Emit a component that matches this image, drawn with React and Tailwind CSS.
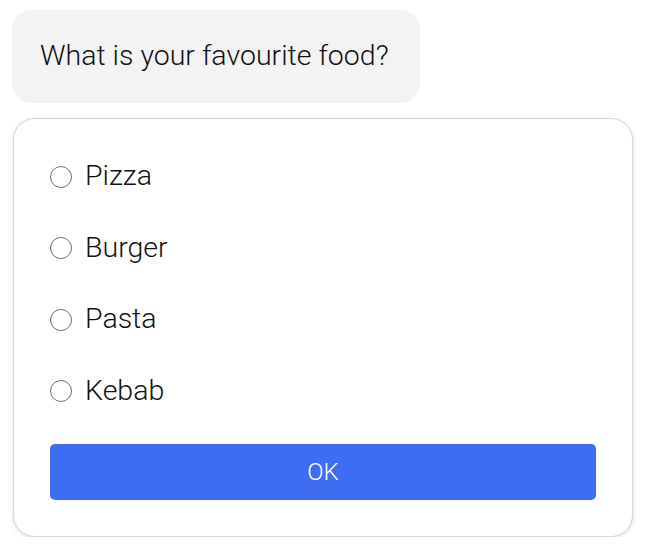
import { useState } from "react";

const options = ["Pizza", "Burger", "Pasta", "Kebab"];

const App = () => {
    const [value, setValue] = useState(null);

    return (
        <div className="pt-[10px] pl-[12px] font-['Roboto',sans-serif] text-[#111]">
            <div className="w-[408px] h-[93px] rounded-[20px] bg-[#f3f3f3] flex items-center pl-[28px] text-[28.5px] font-light">
                What is your favourite food?
            </div>
            <div className="mt-[15px] ml-[1px] w-[620px] rounded-[22px] border border-[#d8d8d8] bg-white shadow-[0_1px_4px_rgba(0,0,0,0.14)] px-[36px] pt-[22px] pb-[36px]">
                {options.map((option) => (
                    <label key={option} className="h-[71.5px] flex items-center gap-[13px] cursor-pointer">
                        <span
                            className="w-[22px] h-[22px] rounded-full border-[1.5px] border-[#6f6f6f] flex items-center justify-center"
                            onClick={() => setValue(option)}
                        >
                            {value === option && <span className="w-[12px] h-[12px] rounded-full bg-[#3d6ef2]" />}
                        </span>
                        <span className="text-[28.5px] font-light">{option}</span>
                    </label>
                ))}
                <button className="mt-[17px] w-full h-[56px] rounded-[5px] bg-[#3d6ef2] text-white text-[24px] font-light">
                    OK
                </button>
            </div>
        </div>
    );
};

export default App;
